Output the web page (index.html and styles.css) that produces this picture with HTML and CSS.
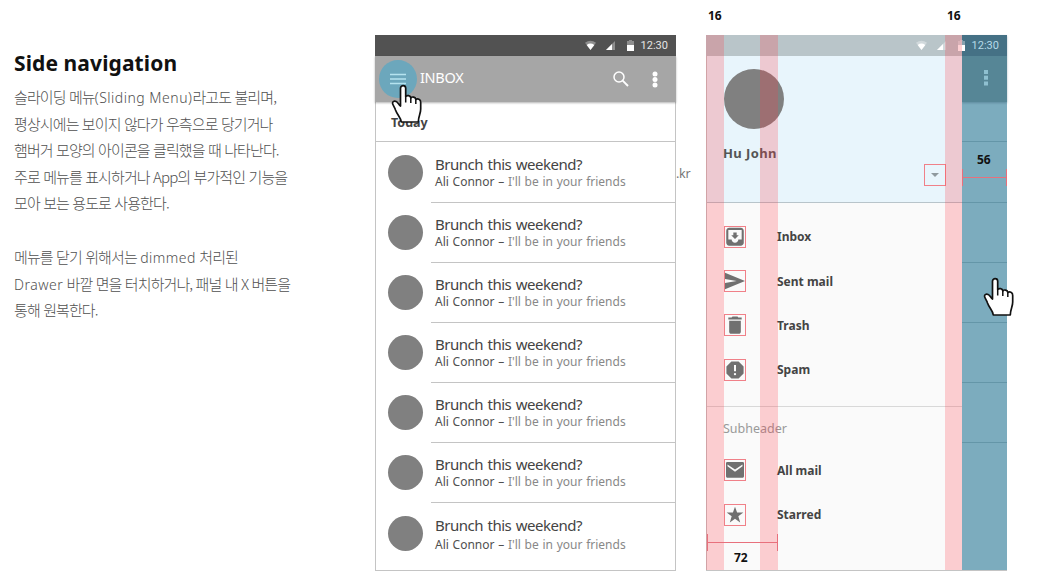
FILE: index.html
```html
<!DOCTYPE html>
<html lang="ko">
<head>
  <meta charset="UTF-8">
  <meta name="viewport" content="width=device-width, initial-scale=1.0">
  <title>Side navigation</title>
  <link rel="stylesheet" href="styles.css">
</head>
<body>
  <svg class="defs" width="0" height="0">
    <symbol id="status" viewBox="0 0 50 12">
      <path d="M0 2.8Q5.500-1.200 11 2.800L5.500 10Z" fill="#fff" opacity=".35"/>
      <path d="M1.700 5Q5.500 2.200 9.300 5L5.500 10Z" fill="#fff"/>
      <path d="M21 10H30V1Z" fill="#fff" opacity=".35"/>
      <path d="M21 10H27V4Z" fill="#fff"/>
      <path d="M43 1H44V0H47V1H49V6H42V1Z" fill="#fff" opacity=".35"/>
      <path d="M42 5H49V11H42Z" fill="#fff"/>
    </symbol>
    <symbol id="hand" viewBox="0 0 32 40">
      <path d="M9.500 22V4.200C9.500.8 14.700.8 14.700 4.200V12.500C16 10.900 19.500 11.400 19.800 13.800C21.200 12.300 24.500 13 24.800 15.500C26.500 14.300 29.900 15 29.700 18.500V25C29.700 30 27.500 31.500 27.300 38H10.300C10 33.500 6 30.500 4.500 26C3.600 22.800 1.300 20.500 1.500 18.800C2 16.400 4.900 16.700 6.300 18.300C7.500 19.500 8 21 9.500 22Z" fill="#fff" stroke="#111" stroke-width="1.700" stroke-linejoin="round"/>
      <path d="M14.700 12.500V18.500M19.800 13.800V19M24.800 15.500V20" stroke="#111" stroke-width="1.500" fill="none"/>
    </symbol>
  </svg>

  <main class="board">
    <section class="about">
      <h1>Side navigation</h1>
      <p>
        <span>슬라이딩 메뉴<i>(Sliding Menu)</i>라고도 불리며,</span>
        <span>평상시에는 보이지 않다가 우측으로 당기거나</span>
        <span>햄버거 모양의 아이콘을 클릭했을 때 나타난다.</span>
        <span>주로 메뉴를 표시하거나 App의 부가적인 기능을</span>
        <span>모아 보는 용도로 사용한다.</span>
      </p>
      <p>
        <span>메뉴를 닫기 위해서는 <i>dimmed</i> 처리된</span>
        <span><i>Drawer</i> 바깥 면을 터치하거나, 패널 내 X 버튼을</span>
        <span>통해 원복한다.</span>
      </p>
    </section>

    <section class="phone">
      <div class="status">
        <svg width="50" height="12"><use href="#status"/></svg>
        <span>12:30</span>
      </div>
      <header class="appbar">
        <div class="menu">
          <svg width="16" height="12" viewBox="0 0 16 12"><path d="M0 1.500H16M0 6H16M0 10.500H16" stroke="#b5e3ef" stroke-width="1.500"/></svg>
          <svg class="hand" width="32" height="40"><use href="#hand"/></svg>
        </div>
        <b>INBOX</b>
        <svg class="search" width="16" height="16" viewBox="0 0 16 16" fill="none" stroke="#fff"><circle cx="6" cy="6" r="5" stroke-width="1.500"/><path d="M9.700 9.700L15 15" stroke-width="1.900"/></svg>
        <svg width="6" height="17" viewBox="0 0 6 17" fill="#fff"><circle cx="3" cy="3" r="2.500"/><circle cx="3" cy="8.500" r="2.500"/><circle cx="3" cy="14" r="2.500"/></svg>
      </header>
      <h2>Today</h2>
      <ul class="mails">
        <li><div><h3>Brunch this weekend?</h3><p>Ali Connor – <span>I'll be in your friends</span></p></div></li>
        <li><div><h3>Brunch this weekend?</h3><p>Ali Connor – <span>I'll be in your friends</span></p></div></li>
        <li><div><h3>Brunch this weekend?</h3><p>Ali Connor – <span>I'll be in your friends</span></p></div></li>
        <li><div><h3>Brunch this weekend?</h3><p>Ali Connor – <span>I'll be in your friends</span></p></div></li>
        <li><div><h3>Brunch this weekend?</h3><p>Ali Connor – <span>I'll be in your friends</span></p></div></li>
        <li><div><h3>Brunch this weekend?</h3><p>Ali Connor – <span>I'll be in your friends</span></p></div></li>
        <li><div><h3>Brunch this weekend?</h3><p>Ali Connor – <span>I'll be in your friends</span></p></div></li>
      </ul>
    </section>

    <aside class="tail">.kr</aside>

    <section class="phone open">
      <div class="drawer">
        <div class="profile">
          <div class="avatar"></div>
          <strong>Hu John</strong>
          <span class="box caret"><svg width="8" height="4" viewBox="0 0 8 4"><path d="M0 0H8L4 4Z" fill="#8f999e"/></svg></span>
        </div>
        <nav class="folders">
          <a><span class="box"><svg viewBox="0 0 24 24"><path fill-rule="evenodd" d="M19 1H5C3.300 1 1.500 2.500 1.500 4.500V19C1.500 20.700 3 22.500 5 22.500H19C20.700 22.500 22.500 21 22.500 19V4.500C22.500 2.500 20.700 1 19 1ZM20 15H16C16 17 14.200 18.800 12 18.800S8 17 8 15H4V3.500H20ZM16.500 10H14V6.500H10V10H7.500L12 14.500Z"/></svg></span>Inbox</a>
          <a><span class="box"><svg viewBox="0 0 24 24"><path d="M0 2L24 12L0 22V14.500L14 12L0 9.500Z"/></svg></span>Sent mail</a>
          <a><span class="box"><svg viewBox="0 0 24 24"><path d="M5 7H19V20C19 21.500 18 22.500 16.500 22.500H7.500C6 22.500 5 21.500 5 20ZM20 3V5.300H4V3H8L9 1.800H15L16 3Z"/></svg></span>Trash</a>
          <a><span class="box"><svg viewBox="0 0 24 24"><path fill-rule="evenodd" d="M7.700 1.700H16.300L22.300 7.700V16.300L16.300 22.300H7.700L1.700 16.300V7.700ZM10.800 6V13.500H13.200V6ZM12 15.500A1.400 1.400 0 1 0 12 18.300A1.400 1.400 0 1 0 12 15.500Z"/></svg></span>Spam</a>
        </nav>
        <div class="subheader">Subheader</div>
        <nav class="folders more">
          <a><span class="box"><svg viewBox="0 0 24 24"><path fill-rule="evenodd" d="M3 2.500H21C22 2.500 22.800 3.200 22.800 4V19.500C22.800 20.500 22 21.300 21 21.300H3C2 21.300 1.200 20.500 1.200 19.500V4C1.200 3.200 2 2.500 3 2.500ZM3 5.500V7.500L12 14L21 7.500V5.500L12 11.500Z"/></svg></span>All mail</a>
          <a><span class="box"><svg viewBox="0 0 24 24"><path d="M12 2L14.500 9H22L16 13.500L18.200 21L12 16.500L5.800 21L8 13.500L2 9H9.500Z"/></svg></span>Starred</a>
        </nav>
      </div>
      <div class="scrim">
        <div class="dim-bar">
          <svg width="4" height="16" viewBox="0 0 4 16" fill="#8fc0d0"><rect width="4" height="4"/><rect y="5.700" width="4" height="4"/><rect y="11.500" width="4" height="4"/></svg>
        </div>
        <div class="cell first"></div>
        <div class="cell second"></div>
        <div class="cell"></div>
        <div class="cell"></div>
        <div class="cell"></div>
        <div class="cell"></div>
        <div class="cell"></div>
      </div>
      <div class="status over">
        <svg width="50" height="12"><use href="#status"/></svg>
        <span>12:30</span>
      </div>

      <!-- keylines -->
      <i class="band b1"></i>
      <i class="band b2"></i>
      <i class="band b3"></i>
      <em class="num n1">16</em>
      <em class="num n2">16</em>
      <em class="num n3">56</em>
      <em class="num n4">72</em>
      <i class="measure m56"></i>
      <i class="measure m72"></i>
      <svg class="hand" width="32" height="40"><use href="#hand"/></svg>
    </section>
  </main>
</body>
</html>
```
FILE: styles.css
```css
* {
  box-sizing: border-box;
  margin: 0;
  padding: 0;
}
body {
  width: 1037px;
  height: 586px;
  overflow: hidden;
  background: #fff;
  color: #444;
  font-family: "Noto Sans", "Noto Sans CJK KR", sans-serif;
}
svg {
  display: block;
}
i, em {
  font-style: normal;
}
.defs {
  position: absolute;
}
.board {
  display: grid;
  grid-template-columns: 361px 301px 30px 301px;
  padding: 35px 0 0 14px;
}

/* description */
.about h1 {
  font-size: 21px;
  line-height: 28px;
  padding-top: 14px;
  margin-bottom: 7px;
  color: #111;
  letter-spacing: .1px;
}
.about p {
  font-size: 15px;
  line-height: 26.6px;
  margin-bottom: 27px;
  color: #505050;
  letter-spacing: -.89px;
  white-space: nowrap;
  font-family: "Noto Sans CJK KR", sans-serif;
  font-weight: 300;
}
.about p span {
  display: block;
  height: 26.6px;
}
.about p i {
  font-family: "Noto Sans", sans-serif;
  font-size: 14px;
  line-height: 1;
  letter-spacing: .5px;
}

/* phone */
.phone {
  position: relative;
  height: 536px;
  border: 1px solid #c4c4c4;
  border-top: 0;
  background: #fff;
}
.status {
  display: flex;
  align-items: center;
  justify-content: flex-end;
  gap: 6px;
  height: 21px;
  margin: 0 -1px;
  padding-right: 8px;
  background: #525252;
  color: #e4e4e4;
  font: 11px Roboto, sans-serif;
}
.appbar {
  display: flex;
  align-items: center;
  height: 46px;
  margin: 0 -1px;
  padding: 0 18px 0 4px;
  background: #a6a6a6;
  box-shadow: 0 1px 2px rgba(0, 0, 0, .3);
  color: #fff;
}
.menu {
  position: relative;
  display: flex;
  align-items: center;
  justify-content: center;
  width: 38px;
  height: 38px;
  border-radius: 50%;
  background: #6ca7bc;
}
.hand {
  position: absolute;
  z-index: 3;
}
.menu .hand {
  left: 12px;
  top: 24px;
}
.appbar b {
  flex: 1;
  padding: 0 0 4px 3px;
  font-size: 14.5px;
  font-weight: 400;
  letter-spacing: -.3px;
}
.search {
  margin-right: 23px;
}
.phone h2 {
  height: 40px;
  padding-left: 15px;
  border-bottom: 1px solid #c4c4c4;
  font-size: 12.5px;
  line-height: 41px;
}
.mails {
  list-style: none;
}
.mails li {
  display: flex;
  align-items: flex-start;
  gap: 8px;
  height: 60px;
  padding-left: 12px;
}
.mails li::before {
  content: "";
  width: 35px;
  height: 35px;
  margin-top: 12.5px;
  border-radius: 50%;
  background: #808080;
}
.mails div {
  flex: 1;
  height: 61px;
  padding: 12px 0 0 4px;
  border-bottom: 1px solid #c4c4c4;
}
.mails h3 {
  font-size: 15px;
  line-height: 20px;
  font-weight: 400;
  letter-spacing: -.48px;
  word-spacing: 1px;
}
.mails p {
  font-size: 12px;
  line-height: 16px;
  word-spacing: .6px;
  color: #505050;
}
.mails span {
  color: #888;
}
.mails li:last-child {
  height: 63px;
}
.mails li:last-child::before {
  margin-top: 14px;
}
.mails li:last-child div {
  padding-top: 13px;
  border: 0;
}
.mails li:last-child p {
  padding-top: 2px;
}
.tail {
  padding-top: 130px;
  font-size: 12.5px;
  line-height: 18px;
  letter-spacing: -.3px;
  color: #777;
}

/* opened drawer */
.open {
  display: flex;
  border-right: 0;
}
.drawer {
  width: 255px;
  background: #fafafa;
}
.profile {
  position: relative;
  height: 168px;
  padding: 34px 17px 0;
  background: #e8f5fc;
  border-bottom: 1px solid #b8c4ca;
}
.avatar {
  width: 60px;
  height: 60px;
  border-radius: 50%;
  background: #808080;
}
.profile strong {
  display: block;
  margin: 15px 0 0 -1px;
  font-size: 13px;
  line-height: 18px;
  letter-spacing: .4px;
  color: #555;
}
.box {
  display: flex;
  align-items: center;
  justify-content: center;
  width: 22px;
  height: 22px;
  border: 1px solid #f08088;
}
.box svg {
  fill: #707070;
}
.caret {
  position: absolute;
  right: 16px;
  bottom: 16px;
}
.folders {
  height: 203px;
  padding: 11.5px 0 0 17px;
}
.folders a {
  display: flex;
  align-items: center;
  gap: 31px;
  height: 44.4px;
  font-size: 12px;
  font-weight: 700;
}
.folders .box svg {
  width: 20px;
  height: 20px;
}
.subheader {
  height: 42px;
  padding-left: 16px;
  border-top: 1px solid #d8d8d8;
  font-size: 12.5px;
  line-height: 44px;
  color: #999;
}
.more {
  height: auto;
  padding-top: 0;
}
.scrim {
  flex: 1;
  background: #7cacbe;
}
.dim-bar {
  display: flex;
  justify-content: center;
  height: 67px;
  padding: 35px 0 0 2px;
  background: linear-gradient(#457185 21px, #568696 21px);
  box-shadow: 0 1px 2px rgba(50, 90, 110, .4);
}
.cell {
  height: 60px;
  border-bottom: 1px solid #6496a8;
}
.cell.first {
  height: 40px;
}
.cell.second {
  height: 61px;
}
.cell:last-child {
  border: 0;
}
.over {
  position: absolute;
  left: 0;
  right: 0;
  top: 0;
  margin-right: 0;
  background: linear-gradient(90deg, #b9c5c9 256px, transparent 256px);
  color: #b5dbe8;
}

/* keylines */
.band {
  position: absolute;
  top: 0;
  bottom: 0;
  width: 18px;
  background: rgba(255, 58, 70, .23);
}
.b1 { left: -1px; }
.b2 { left: 53px; }
.b3 { left: 238px; width: 17px; }
.num {
  position: absolute;
  font-size: 12px;
  line-height: 16px;
  font-weight: 700;
  color: #111;
}
.n1 { left: 1px; top: -27px; }
.n2 { left: 240px; top: -27px; }
.n3 { left: 270px; top: 117px; }
.n4 { left: 27px; top: 515px; }
.measure {
  position: absolute;
  z-index: 2;
  height: 17px;
  border: solid #e8707c;
  border-width: 0 1px;
}
.measure::after {
  content: "";
  display: block;
  height: 1px;
  margin-top: 8px;
  background: #e8707c;
}
.m56 {
  left: 255px;
  top: 134px;
  width: 45px;
}
.m72 {
  left: 0;
  top: 499px;
  width: 71px;
}
.open .hand {
  left: 276px;
  top: 242px;
}
```
